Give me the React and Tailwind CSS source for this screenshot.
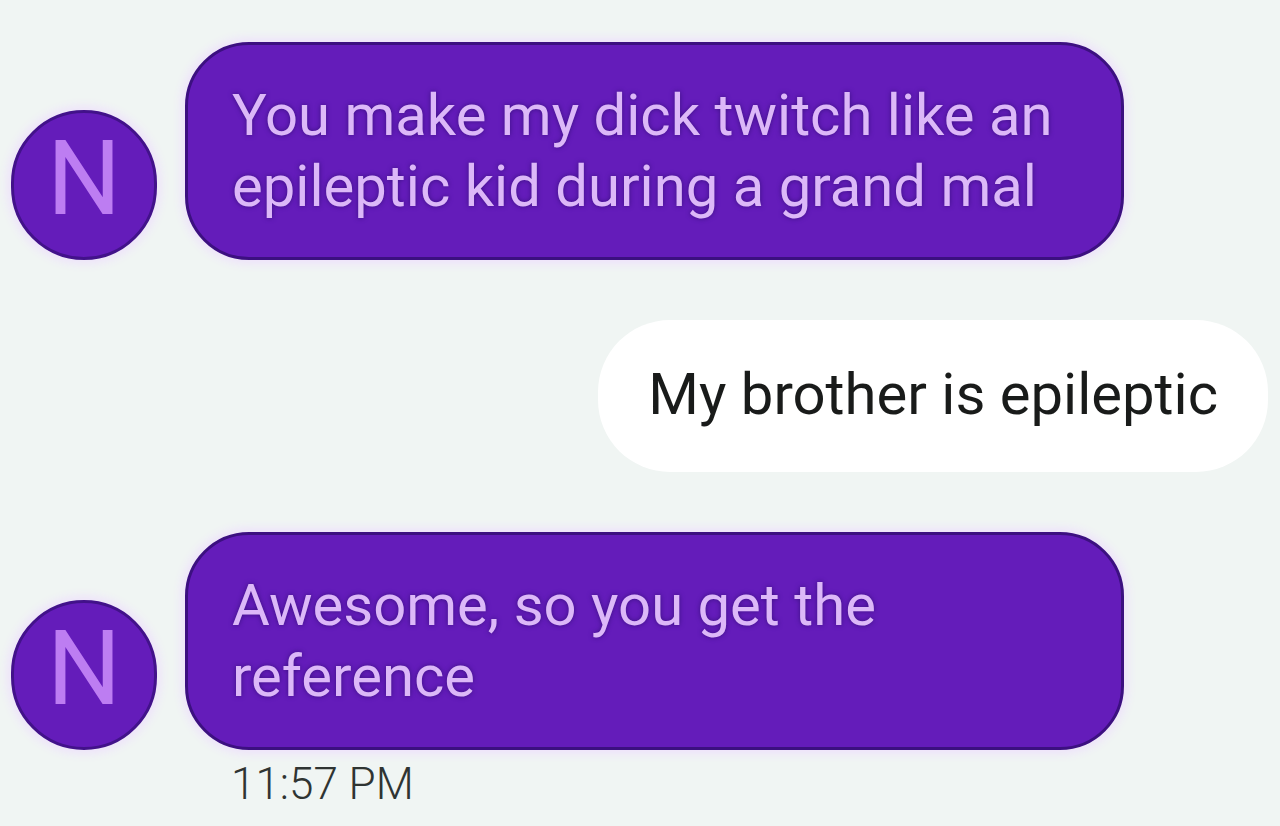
import React from "react";

const messages = [
  {
    id: 1,
    from: "N",
    text: "You make my dick twitch like an epileptic kid during a grand mal",
  },
  { id: 2, from: "me", text: "My brother is epileptic" },
  {
    id: 3,
    from: "N",
    text: "Awesome, so you get the reference",
    time: "11:57 PM",
  },
];

function Avatar({ letter }) {
  return (
    <div className="flex h-[150px] w-[146px] shrink-0 items-center justify-center rounded-full border-3 border-[#42128a] bg-[#641cba] pb-3 text-[104px] leading-none text-[#bd7df2] shadow-[0_0_10px_4px_#eee2fb]">
      {letter}
    </div>
  );
}

function Received({ message }) {
  return (
    <div className="mr-36">
      <div className="flex items-end gap-7">
        <Avatar letter={message.from} />
        <p className="grow rounded-[64px] border-3 border-[#3c1080] bg-[#641cba] px-11 py-[35px] text-[58px] leading-[71px] text-[#dcb8f8] shadow-[0_0_10px_4px_#eee2fb] text-shadow-[0_0_5px_#3a1080]">
          {message.text}
        </p>
      </div>
      {message.time && (
        <time className="ml-[220px] mt-3 block text-[44px] font-light leading-[44px] text-[#2f3432]">
          {message.time}
        </time>
      )}
    </div>
  );
}

function Sent({ message }) {
  return (
    <p className="self-end rounded-[72px] bg-white px-[50px] pb-[42px] pt-[38px] text-[58px] leading-[72px] text-[#191b1a]">
      {message.text}
    </p>
  );
}

export default function App() {
  return (
    <main className="flex min-h-screen flex-col gap-[60px] bg-[#f0f5f3] pb-4 pl-[11px] pr-3 pt-[42px] font-['Roboto',sans-serif]">
      {messages.map((message) =>
        message.from === "me" ? (
          <Sent key={message.id} message={message} />
        ) : (
          <Received key={message.id} message={message} />
        )
      )}
    </main>
  );
}
